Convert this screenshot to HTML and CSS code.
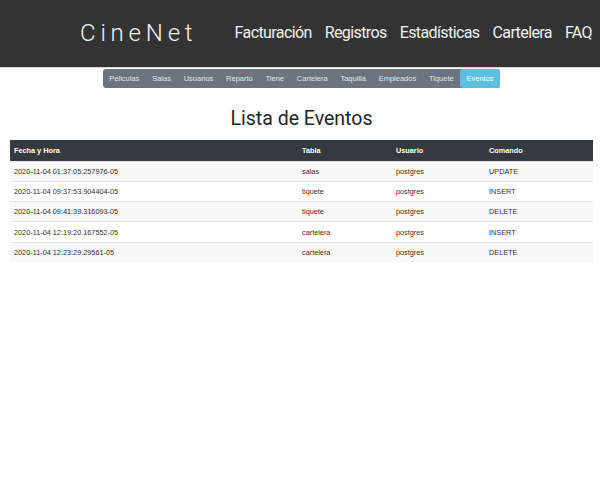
FILE: index.html
```html
<!DOCTYPE html>
<html lang="es">
<head>
<meta charset="utf-8">
<title>CineNet - Eventos</title>
<link rel="stylesheet" href="styles.css">
</head>
<body>
<header class="topbar">
  <div class="brand">CineNet</div>
  <nav class="mainnav">
    <a href="#">Facturación</a>
    <a href="#">Registros</a>
    <a href="#">Estadísticas</a>
    <a href="#">Cartelera</a>
    <a href="#">FAQ</a>
  </nav>
</header>
<div class="pillwrap">
  <nav class="pills">
    <a href="#">Peliculas</a>
    <a href="#">Salas</a>
    <a href="#">Usuarios</a>
    <a href="#">Reparto</a>
    <a href="#">Tiene</a>
    <a href="#">Cartelera</a>
    <a href="#">Taquilla</a>
    <a href="#">Empleados</a>
    <a href="#">Tiquete</a>
    <a href="#" class="active">Eventos</a>
  </nav>
</div>
<main class="content">
  <h1 class="title">Lista de Eventos</h1>
  <table class="events">
    <thead>
      <tr><th class="c1">Fecha y Hora</th><th class="c2">Tabla</th><th class="c3">Usuario</th><th class="c4">Comando</th></tr>
    </thead>
    <tbody>
      <tr><td>2020-11-04 01:37:05.257976-05</td><td>salas</td><td>postgres</td><td>UPDATE</td></tr>
      <tr><td>2020-11-04 09:37:53.904404-05</td><td>tiquete</td><td>postgres</td><td>INSERT</td></tr>
      <tr><td>2020-11-04 09:41:39.316093-05</td><td>tiquete</td><td>postgres</td><td>DELETE</td></tr>
      <tr><td>2020-11-04 12:19:20.167552-05</td><td>cartelera</td><td>postgres</td><td>INSERT</td></tr>
      <tr><td>2020-11-04 12:23:29.29561-05</td><td>cartelera</td><td>postgres</td><td>DELETE</td></tr>
    </tbody>
  </table>
</main>
</body>
</html>
```
FILE: styles.css
```css
* { box-sizing: border-box; }
html, body { margin: 0; padding: 0; background: #fff; }
body { font-family: Roboto, "Liberation Sans", Arial, sans-serif; color: #212529; }

.topbar {
  height: 68px;
  background: #333333;
  border-bottom: 1px solid #d5d5d5;
  display: flex;
  align-items: center;
  justify-content: space-between;
  padding: 0 8px 0 80px;
}
.brand {
  color: #f4f4f4;
  font-size: 24px;
  font-weight: 300;
  letter-spacing: 4.8px;
  margin-top: -1px;
}
.mainnav { display: flex; gap: 13px; margin-top: -2px; }
.mainnav a {
  color: #f2f2f2;
  text-decoration: none;
  font-size: 16px;
  letter-spacing: -0.6px;
}

.pillwrap { display: flex; justify-content: center; padding-top: 1px; padding-left: 3px; }
.pills {
  display: flex;
  background: #6c757d;
  border-radius: 3px;
  height: 19px;
  align-items: stretch;
  overflow: hidden;
}
.pills a {
  display: flex;
  align-items: center;
  padding: 0 6.4px;
  font-family: "Liberation Sans", Arial, sans-serif;
  font-size: 7.5px;
  color: #e2e5e8;
  text-decoration: none;
}
.pills a.active { background: #5bc0de; color: #fff; border-radius: 3px; }

.content { padding: 0 7px 0 10px; }
.title {
  margin: 15px 0 0;
  text-align: center;
  font-size: 19.5px;
  font-weight: 400;
  line-height: 32px;
  color: #212529;
}
.events {
  width: 100%;
  border-collapse: collapse;
  margin-top: 5px;
  font-family: "Liberation Sans", Arial, sans-serif;
  font-size: 7.3px;
}
.events th {
  background: #343a40;
  color: #fff;
  font-weight: 700;
  text-align: left;
  height: 21px;
  padding: 0 4px;
}
.events td {
  height: 20.3px;
  padding: 0 4px;
  border-top: 1px solid #e4e6e8;
  color: #333;
}
.events tbody tr:nth-child(odd) td { background: #f8f8f8; }
.events .c1 { width: 288px; }
.events .c2 { width: 94px; }
.events .c3 { width: 93px; }
```
